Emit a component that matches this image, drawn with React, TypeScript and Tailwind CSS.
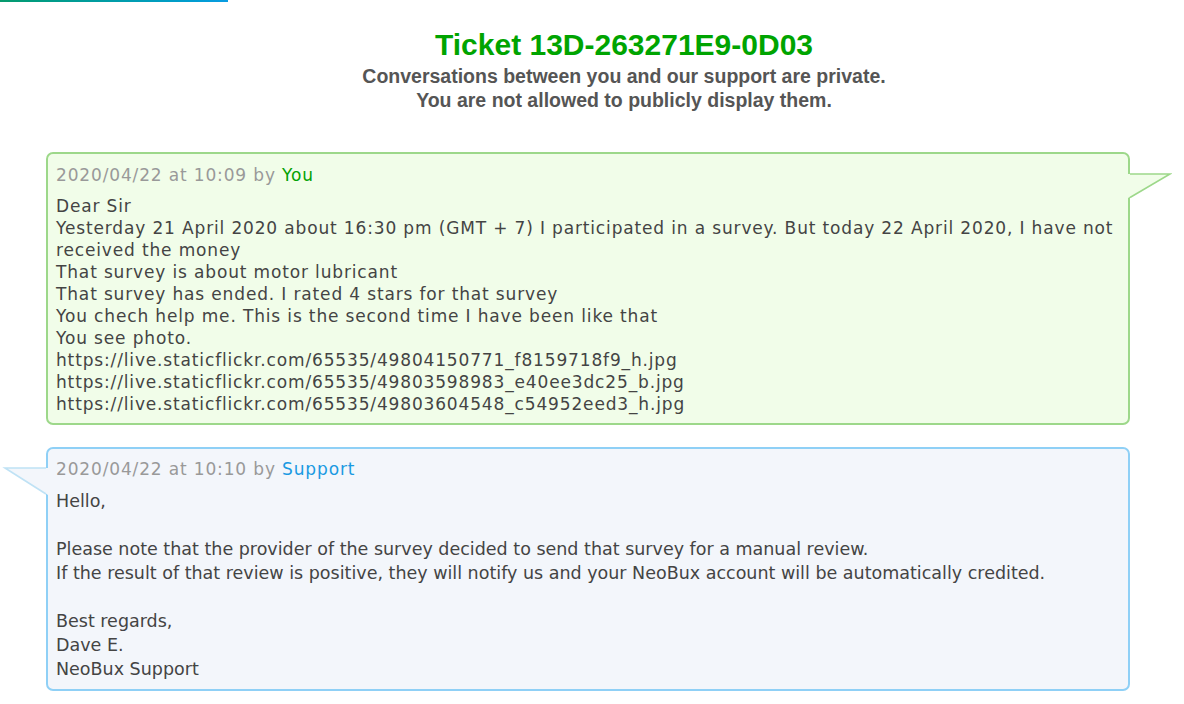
const youLines = [
  "Dear Sir",
  "Yesterday 21 April 2020 about 16:30 pm (GMT + 7) I participated in a survey. But today 22 April 2020, I have not received the money",
  "That survey is about motor lubricant",
  "That survey has ended. I rated 4 stars for that survey",
  "You chech help me. This is the second time I have been like that",
  "You see photo.",
  "https://live.staticflickr.com/65535/49804150771_f8159718f9_h.jpg",
  "https://live.staticflickr.com/65535/49803598983_e40ee3dc25_b.jpg",
  "https://live.staticflickr.com/65535/49803604548_c54952eed3_h.jpg",
];

const supportLines = [
  "Hello,",
  "",
  "Please note that the provider of the survey decided to send that survey for a manual review.",
  "If the result of that review is positive, they will notify us and your NeoBux account will be automatically credited.",
  "",
  "Best regards,",
  "Dave E.",
  "NeoBux Support",
];

export default function App() {
  return (
    <div className="min-h-screen bg-white" style={{ fontFamily: "'DejaVu Sans', Verdana, sans-serif" }}>
      <div className="w-[228px] h-[2px] bg-gradient-to-r from-[#079a6c] to-[#0a9ce2]" />

      <div className="pl-[64px] pt-[25px] text-center" style={{ fontFamily: "'Liberation Sans', Arial, sans-serif" }}>
        <h1 className="text-[30px] leading-[36px] font-bold text-[#00a400]">Ticket 13D-263271E9-0D03</h1>
        <p className="mt-[1px] text-[19.5px] leading-[24px] font-bold text-[#555555]">
          Conversations between you and our support are private.
          <br />
          You are not allowed to publicly display them.
        </p>
      </div>

      {/* message from user */}
      <div className="relative ml-[46px] mt-[40px] w-[1084px]">
        <div className="rounded-[7px] border-2 border-[#9dd88a] bg-[#f1fde9] px-[8px] pt-[10px] pb-[8px] text-[17px] leading-[22px] tracking-[0.85px] text-[#444444]">
          <div className="mb-[9px] text-[#999999]">
            2020/04/22 at 10:09 by <span className="text-[#04a204]">You</span>
          </div>
          {youLines.map((l, i) => (
            <div key={i}>{l}</div>
          ))}
        </div>
        <svg className="absolute left-[1082px] top-[21px]" width="44" height="28" viewBox="0 0 44 28">
          <polygon points="0,1 42,1 0,25" fill="#f1fde9" />
          <polyline points="2,1 42,1 2,24.5" fill="none" stroke="#9dd88a" strokeWidth="1.6" />
        </svg>
      </div>

      {/* reply from support */}
      <div className="relative ml-[46px] mt-[22px] w-[1084px]">
        <div className="rounded-[7px] border-2 border-[#8fd0f6] bg-[#f3f6fb] px-[8px] pt-[9px] pb-[8px] text-[17.5px] leading-[24px] text-[#444444]">
          <div className="mb-[9px] text-[17px] leading-[22px] tracking-[0.85px] text-[#999999]">
            2020/04/22 at 10:10 by <span className="text-[#1a9ae2]">Support</span>
          </div>
          {supportLines.map((l, i) => (
            <div key={i} className="min-h-[24px]">{l}</div>
          ))}
        </div>
        <svg className="absolute left-[-44px] top-[20px]" width="46" height="32" viewBox="0 0 46 32">
          <polygon points="46,1 3,1 46,28" fill="#f3f6fb" />
          <polyline points="44,1 3,1 44,27" fill="none" stroke="#bfe2f5" strokeWidth="1.6" />
        </svg>
      </div>
    </div>
  );
}
